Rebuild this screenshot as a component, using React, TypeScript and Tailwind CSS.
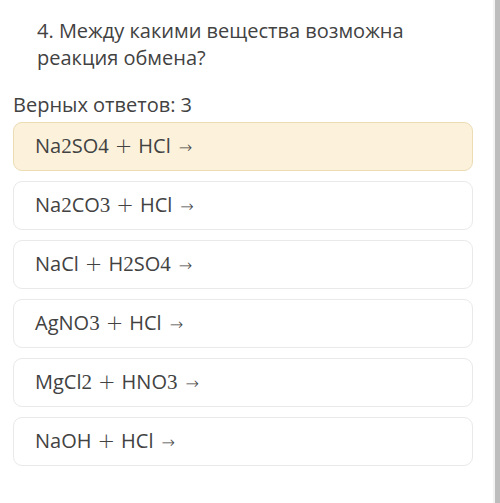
import React from "react";

type Part = { t: string; kind: "txt" | "num" | "plus" | "arrow" };

// Split a formula so that digits, plus signs and arrows use the math face
function splitFormula(s: string): Part[] {
  const out: Part[] = [];
  for (const ch of s.replace(/ /g, "")) {
    const kind: Part["kind"] =
      ch === "+" ? "plus" : ch === "→" ? "arrow" : /[0-9]/.test(ch) ? "num" : "txt";
    const last = out[out.length - 1];
    if (last && last.kind === kind && kind !== "plus" && kind !== "arrow") last.t += ch;
    else out.push({ t: ch, kind });
  }
  return out;
}

const options = [
  { text: "Na2SO4 + HCl →", selected: true },
  { text: "Na2CO3 + HCl →" },
  { text: "NaCl + H2SO4 →" },
  { text: "AgNO3 + HCl →" },
  { text: "MgCl2 + HNO3 →" },
  { text: "NaOH + HCl →" },
];

function Formula({ s }: { s: string }) {
  return (
    <span className="whitespace-pre flex items-baseline">
      {splitFormula(s).map((p, i) => {
        if (p.kind === "num")
          return (
            <span key={i} className="font-['Liberation_Serif',serif] text-[21px]">
              {p.t}
            </span>
          );
        if (p.kind === "plus")
          return (
            <span key={i} className="font-['DejaVu_Sans',sans-serif] font-extralight text-[21px] px-[6px]">
              {p.t}
            </span>
          );
        if (p.kind === "arrow")
          return (
            <span key={i} className="font-['DejaVu_Sans',sans-serif] text-[16px] font-extralight pl-[8px]">
              {p.t}
            </span>
          );
        return <span key={i}>{p.t}</span>;
      })}
    </span>
  );
}

export default function App() {
  return (
    <div className="w-[500px] h-[503px] bg-white flex overflow-hidden font-['Open_Sans',sans-serif] text-[#424242]">
      <div className="flex-1 flex flex-col pl-[13px] pr-[20px]">
        <div className="pl-[24px] pt-[17px] text-[20px] leading-[27px]">
          4. Между какими вещества возможна
          <br />
          реакция обмена?
        </div>
        <div className="mt-[22px] text-[20px] leading-[24px]">Верных ответов: 3</div>
        <div className="mt-[5px] flex flex-col gap-[10px]">
          {options.map((o, i) => (
            <div
              key={i}
              className={
                o.selected
                  ? "h-[49px] rounded-[9px] border border-[#ecdcb4] bg-[#fcf2dc] flex items-center pl-[21px] text-[20px]"
                  : "h-[49px] rounded-[9px] border border-[#e9e9e9] bg-white flex items-center pl-[21px] text-[20px]"
              }
            >
              <Formula s={o.text} />
            </div>
          ))}
        </div>
      </div>
      <div className="w-[7px] flex">
        <div className="w-[2px] bg-[#f3f3f3]" />
        <div className="flex-1 bg-[#bdbdbd]" />
      </div>
    </div>
  );
}
